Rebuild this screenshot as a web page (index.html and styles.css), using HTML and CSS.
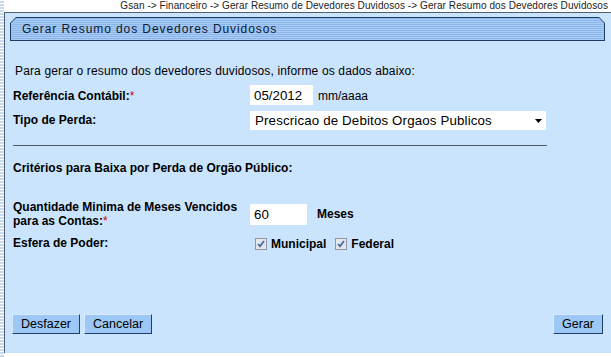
FILE: index.html
```
<!DOCTYPE html>
<html lang="pt">
<head>
<meta charset="utf-8">
<link rel="stylesheet" href="styles.css">
</head>
<body>
<div class="page">
  <div class="stripe"></div>
  <div class="main">
    <div class="crumb">Gsan -&gt; Financeiro -&gt; Gerar Resumo de Devedores Duvidosos -&gt; Gerar Resumo dos Devedores Duvidosos</div>
    <div class="panel">
      <div class="titlebar"><div class="titlebar-inner">Gerar Resumo dos Devedores Duvidosos</div></div>
      <div class="content">
        <p class="intro">Para gerar o resumo dos devedores duvidosos, informe os dados abaixo:</p>
        <div class="grid">
          <div class="label">Referência Contábil:<span class="req">*</span></div>
          <div class="field"><input class="txt ref" type="text" value="05/2012"><span class="hint">mm/aaaa</span></div>
          <div class="label">Tipo de Perda:</div>
          <div class="field"><div class="select"><span>Prescricao de Debitos Orgaos Publicos</span><svg width="7" height="4" viewBox="0 0 7 4"><path d="M0 0h7L3.5 4z" fill="#000"/></svg></div></div>
        </div>
        <div class="rule"></div>
        <div class="section">Critérios para Baixa por Perda de Orgão Público:</div>
        <div class="grid grid2">
          <div class="label two">Quantidade Minima de Meses Vencidos<br>para as Contas:<span class="req">*</span></div>
          <div class="field"><input class="txt qty" type="text" value="60"><span class="unit">Meses</span></div>
          <div class="label">Esfera de Poder:</div>
          <div class="field checks">
            <span class="cb"><svg width="12" height="12" viewBox="0 0 12 12"><rect x="0.5" y="0.5" width="11" height="11" fill="#e4e6ea" stroke="#8e98a6"/><path d="M3 6l2 2.4L9 3" fill="none" stroke="#4d6ea3" stroke-width="1.8"/></svg>Municipal</span>
            <span class="cb"><svg width="12" height="12" viewBox="0 0 12 12"><rect x="0.5" y="0.5" width="11" height="11" fill="#e4e6ea" stroke="#8e98a6"/><path d="M3 6l2 2.4L9 3" fill="none" stroke="#4d6ea3" stroke-width="1.8"/></svg>Federal</span>
          </div>
        </div>
        <div class="buttons">
          <div class="left"><button class="btn">Desfazer</button><button class="btn">Cancelar</button></div>
          <button class="btn">Gerar</button>
        </div>
      </div>
    </div>
  </div>
</div>
</body>
</html>
```
FILE: styles.css
```
html, body { margin: 0; padding: 0; background: #fff; }
body { font-family: "Liberation Sans", Arial, sans-serif; font-size: 12px; color: #000; }
.page { display: flex; width: 611px; height: 357px; overflow: hidden; }
.stripe { width: 4px; flex: none; background: repeating-linear-gradient(to bottom, #ffffff 0 1px, #c9dbf0 1px 3px); }
.main { flex: 1; display: flex; flex-direction: column; }
.crumb { height: 12px; line-height: 11px; font-size: 10px; letter-spacing: 0.08px; text-align: right; padding-right: 3px; color: #222; white-space: nowrap; }
.panel { height: 341px; box-sizing: border-box; border-left: 1px solid #53606e; border-top: 1px solid #53606e; background: #cbe4fd; padding: 4px 6px 0 5px; }
.titlebar { height: 24px; background: #1e3a66; padding: 1px; box-sizing: border-box; clip-path: polygon(6px 0, calc(100% - 6px) 0, 100% 6px, 100% 100%, 0 100%, 0 6px); }
.titlebar-inner { height: 100%; background: repeating-linear-gradient(to bottom, #8bb7ec 0 1px, #a9cbf3 1px 2px); clip-path: polygon(5px 0, calc(100% - 5px) 0, 100% 5px, 100% 100%, 0 100%, 0 5px); padding-left: 11px; font-size: 12px; letter-spacing: 0.92px; line-height: 22px; color: #0b1a33; }
.content { padding-left: 3px; }
.intro { margin: 23px 0 6px 2px; line-height: 14px; letter-spacing: 0.14px; }
.grid { display: grid; grid-template-columns: 237px auto; grid-auto-rows: 24px; align-items: center; }
.label { font-weight: bold; line-height: 14px; }
.req { color: #d0001c; font-weight: normal; }
.field { display: flex; align-items: center; }
.txt { font-family: "Liberation Sans", Arial, sans-serif; font-size: 13.3px; border: none; background: #fff; height: 20px; box-sizing: border-box; padding: 0 4px; margin: 0; outline: none; }
.ref { width: 63px; margin-top: -2px; }
.hint { margin-left: 5px; }
.select { width: 296px; height: 19px; background: #fff; display: flex; align-items: center; justify-content: space-between; padding: 0 4px 0 5px; box-sizing: border-box; font-size: 13.3px; letter-spacing: 0.15px; }
.select svg { margin-top: 1px; }
.rule { width: 534px; height: 1px; background: #555a60; margin: 13px 0 0; }
.section { font-weight: bold; line-height: 14px; margin-top: 15px; }
.grid2 { margin-top: 25px; grid-template-rows: 28px 30px; }
.qty { width: 57px; height: 21px; }
.unit { font-weight: bold; margin-left: 10px; }
.checks { gap: 9px; padding-left: 5px; padding-top: 1px; }
.cb { display: inline-flex; align-items: center; gap: 4px; font-weight: bold; }
.buttons { display: flex; justify-content: space-between; margin: 56px 2px 0 -1px; }
.left { display: flex; gap: 4px; }
.btn { font-family: "Liberation Sans", Arial, sans-serif; font-size: 12.5px; height: 20px; padding: 0 8px; background: #9dc8f5; border: 1px solid; border-color: #d8eafd #1f3e68 #1f3e68 #d8eafd; margin: 0; color: #000; }
```
